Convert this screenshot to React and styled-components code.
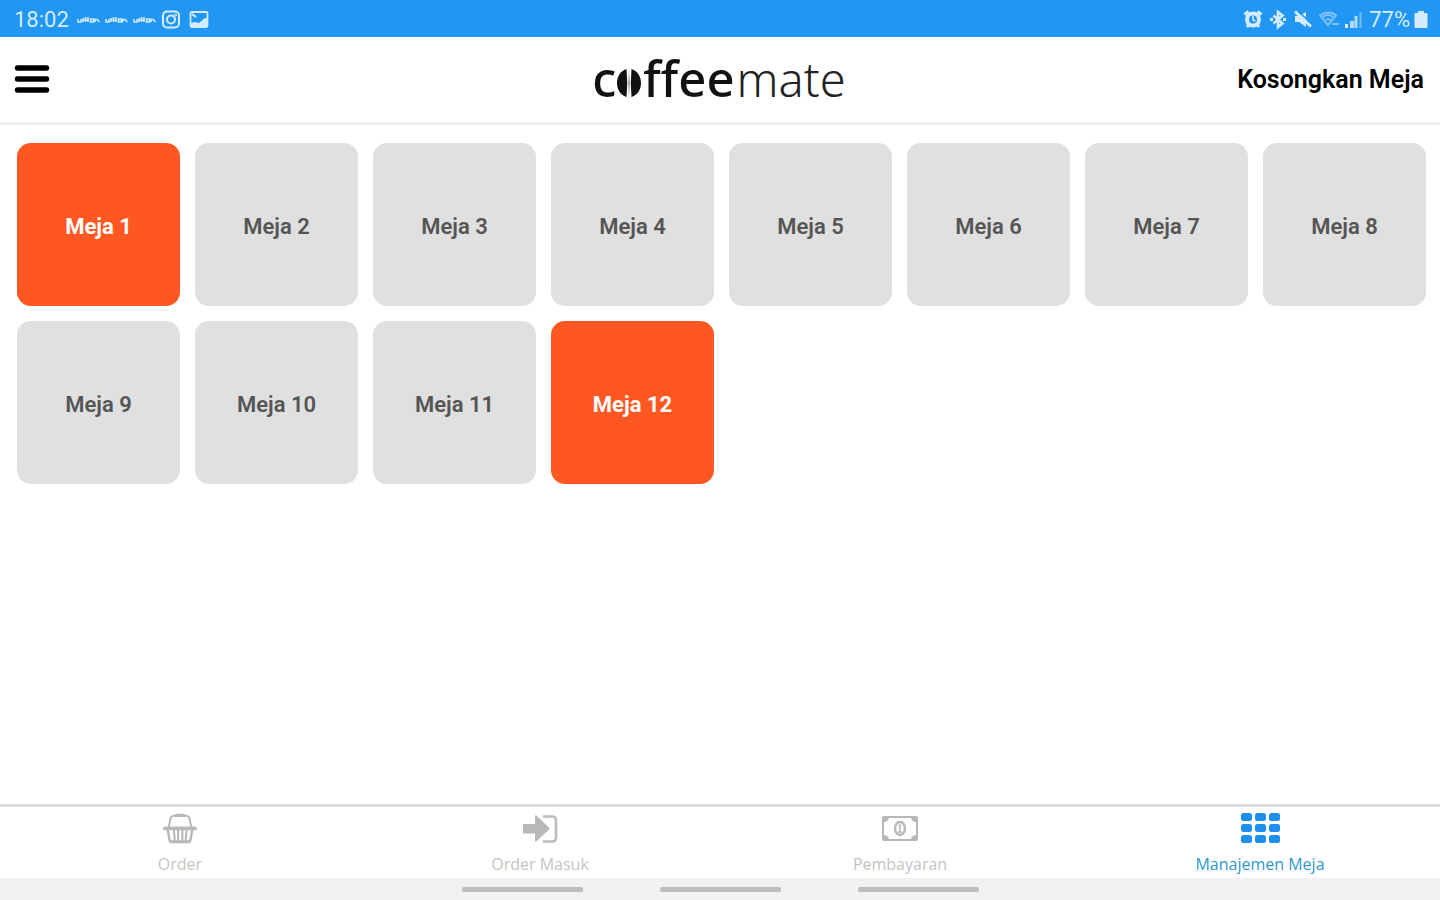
import React from "react";
import styled, { createGlobalStyle } from "styled-components";

const GlobalStyle = createGlobalStyle`
  *, *::before, *::after { box-sizing: border-box; }
  body {
    margin: 0;
    background: #fff;
    color: #000;
    font-family: Roboto, "Liberation Sans", sans-serif;
  }
`;

const Screen = styled.div`
  display: flex;
  flex-direction: column;
  min-height: 100vh;
`;

const StatusBar = styled.div`
  display: flex;
  align-items: center;
  justify-content: space-between;
  height: 37px;
  padding: 2px 12px 0 14px;
  background: #2196f3;
  color: #d3ecff;
  font-size: 22px;
  line-height: 24px;
`;

const StatusGroup = styled.div`
  display: flex;
  align-items: center;
  gap: ${(p) => p.$gap}px;
`;

const StatusIcon = styled.svg`
  display: block;
  flex: none;
`;

const Header = styled.header`
  display: grid;
  grid-template-columns: 1fr auto 1fr;
  align-items: center;
  height: 88px;
  padding: 0 16px 0 14px;
  border-bottom: 3px solid #eeeeee;
`;

const PlainButton = styled.button`
  padding: 0;
  border: 0;
  background: none;
  color: inherit;
  font-family: inherit;
  cursor: pointer;
`;

const MenuButton = styled(PlainButton)`
  justify-self: start;
  svg { display: block; }
`;

const ClearButton = styled(PlainButton)`
  justify-self: end;
  font-size: 25px;
  font-weight: 600;
  line-height: 28px;
`;

const Logo = styled.h1`
  display: flex;
  align-items: baseline;
  margin: 0;
  padding-bottom: 2px;
  font-family: "Noto Sans", "Open Sans", sans-serif;
  font-size: 49px;
  font-weight: 500;
  line-height: 64px;
  color: #111;
`;

const LogoLight = styled.span`
  padding-left: 2px;
  font-size: 47px;
  font-weight: 350;
  color: #222;
`;

const Bean = styled.svg`
  margin: 0 2px 0 1px;
`;

const TableGrid = styled.main`
  flex: 1;
  display: grid;
  grid-template-columns: repeat(8, minmax(0, 1fr));
  align-content: start;
  gap: 15px;
  padding: 18px 14px 18px 17px;
`;

const TableTile = styled(PlainButton)`
  aspect-ratio: 1;
  padding-top: 4px;
  border-radius: 14px;
  background: ${(p) => (p.$busy ? "#ff5722" : "#e0e0e0")};
  color: ${(p) => (p.$busy ? "#fff" : "#555")};
  font-size: 22px;
  font-weight: ${(p) => (p.$busy ? 700 : 600)};
  line-height: 26px;
`;

const TabBar = styled.nav`
  display: grid;
  grid-template-columns: repeat(4, 1fr);
  height: 74px;
  border-top: 3px solid #dddddd;
`;

const Tab = styled.a`
  display: flex;
  flex-direction: column;
  align-items: center;
  gap: 9px;
  padding-top: 5px;
  color: ${(p) => (p.$active ? "#2f97d0" : "#c4c4c4")};
  font-family: "Open Sans", "Noto Sans", sans-serif;
  font-size: 16px;
  font-weight: ${(p) => (p.$active ? 500 : 400)};
  line-height: 22px;
  text-decoration: none;
  svg { display: block; }
`;

const GestureBar = styled.div`
  display: flex;
  justify-content: center;
  gap: 77px;
  height: 22px;
  padding-top: 9px;
  background: #f1f1f1;
`;

const Handle = styled.span`
  width: 121px;
  height: 5px;
  border-radius: 2px;
  background: #bdbdbd;
`;

const Carrier = () => (
  <StatusIcon width="24" height="10" viewBox="0 0 24 10" fill="none" stroke="currentColor" strokeWidth="1.6" aria-hidden="true">
    <path d="M1 4v3h3V4M6 7V3M8.500 7V2M6 5h5M11 7V2M13.500 7V4h3v3zM18 7V4.500h2L22.500 7" />
  </StatusIcon>
);

const CameraIcon = () => (
  <StatusIcon width="20" height="20" viewBox="0 0 20 20" fill="none" stroke="currentColor" strokeWidth="2" aria-hidden="true">
    <rect x="2" y="1.500" width="16" height="16" rx="4" />
    <circle cx="10" cy="9.500" r="4" />
    <circle cx="14.500" cy="5" r="0.500" />
  </StatusIcon>
);

const PictureIcon = () => (
  <StatusIcon width="20" height="18" viewBox="0 0 20 18" aria-hidden="true">
    <rect x="1.500" y="1" width="17" height="15" rx="1.500" fill="none" stroke="currentColor" strokeWidth="1.800" />
    <path d="M2 12l4-1 4 1 6-5 3 1v8H2z" fill="currentColor" />
    <path d="M3 3l4 3" stroke="currentColor" strokeWidth="2" />
  </StatusIcon>
);

const AlarmIcon = () => (
  <StatusIcon width="20" height="20" viewBox="0 0 20 20" fill="none" stroke="currentColor" aria-hidden="true">
    <circle cx="10" cy="9.500" r="6" strokeWidth="4" />
    <path d="M1.500 4.500l4-3M18.500 4.500l-4-3M4 17l2-3M16 17l-2-3" strokeWidth="3" />
    <path d="M10 6v4l2.500 1" strokeWidth="1.600" />
  </StatusIcon>
);

const BluetoothIcon = () => (
  <StatusIcon width="18" height="20" viewBox="0 0 18 20" fill="none" stroke="currentColor" strokeWidth="2.600" aria-hidden="true">
    <path d="M4.500 5.500l9 8L9 17V2l4.500 3.500-9 8" />
    <path d="M1 9.500h3M14 9.500h3" strokeWidth="3" />
  </StatusIcon>
);

const MuteIcon = () => (
  <StatusIcon width="20" height="20" viewBox="0 0 20 20" aria-hidden="true">
    <path d="M2 6h4l7-4v15l-7-5H2z" fill="currentColor" />
    <path d="M2 1.500l16 15" stroke="currentColor" strokeWidth="3" />
    <path d="M5 1l14 13" stroke="#2196f3" strokeWidth="1.400" />
  </StatusIcon>
);

const WifiIcon = () => (
  <StatusIcon width="20" height="18" viewBox="0 0 20 18" fill="none" stroke="currentColor" strokeWidth="1.800" opacity="0.55" aria-hidden="true">
    <path d="M1 4.500c5-4 12-4 16 0L9 14zM4 6c3-2.500 7-2.500 10 0M7 9c1.500-1 3-1 4.500 0M13 13h7" />
  </StatusIcon>
);

const SignalIcon = () => (
  <StatusIcon width="18" height="18" viewBox="0 0 18 18" fill="currentColor" aria-hidden="true">
    <path d="M0 13h3v4H0z" />
    <path d="M5 10h4v7H5zM9.500 5h3v12h-3z" opacity="0.8" />
    <path d="M14.500 1h2v16h-2z" opacity="0.45" />
  </StatusIcon>
);

const BatteryIcon = () => (
  <StatusIcon width="14" height="20" viewBox="0 0 14 20" fill="currentColor" aria-hidden="true">
    <path d="M4 1h6v2h2.500q1 0 1 1v13q0 1-1 1h-11q-1 0-1-1V4q0-1 1-1H4z" />
  </StatusIcon>
);

const BasketIcon = () => (
  <svg width="34" height="32" viewBox="0 0 36 34" fill="none" stroke="#b8b8b8" aria-hidden="true">
    <path d="M6 16L8 6.500Q9 4 12 4h12q3 0 4 2.500L30 16" strokeWidth="2" />
    <path d="M14 3.500h8" strokeWidth="3.500" strokeLinecap="round" />
    <path d="M2 17.500h32" strokeWidth="4" strokeLinecap="round" />
    <path d="M5 19l2 11q.4 2 2.500 2h17q2.100 0 2.500-2l2-11" strokeWidth="2.600" />
    <path d="M8 31.500h20" strokeWidth="3" />
    <path d="M11.500 19l1 12M16 19v12M20.500 19v12M25 19l-1 12" strokeWidth="2.200" />
  </svg>
);

const EnterIcon = () => (
  <svg width="36" height="32" viewBox="0 0 36 32" aria-hidden="true">
    <path d="M1 12h12V4.500q0-2 1.800-.6L27 15.500q1 1 0 2L14.800 29q-1.800 1.400-1.800-.6V21.500H1.500q-.5 0-.5-1z" fill="#b8b8b8" />
    <path d="M21 4.500h9q4 0 4 4v17q0 4-4 4h-9" fill="none" stroke="#bcbcbc" strokeWidth="2.600" />
  </svg>
);

const MoneyIcon = () => (
  <svg width="38" height="32" viewBox="0 0 38 32" fill="none" stroke="#b8b8b8" aria-hidden="true">
    <rect x="2" y="5" width="34" height="23" rx="1" strokeWidth="2" />
    <path d="M2 5h6q0 5-6 5zM36 5h-6q0 5 6 5zM2 28h6q0-5-6-5zM36 28h-6q0-5 6-5z" fill="#b8b8b8" stroke="none" />
    <ellipse cx="19" cy="16.500" rx="5" ry="6.500" strokeWidth="2.400" />
    <path d="M17.500 14l1.500-1v7M17 20h4" strokeWidth="1.500" />
  </svg>
);

const GridIcon = () => (
  <svg width="40" height="32" viewBox="0 0 40 32" fill="#1e8fee" aria-hidden="true">
    {[1, 12, 23].map((y) =>
      [1, 15, 29].map((x) => <rect key={`${x}-${y}`} x={x} y={y} width="11" height="8" rx="2.500" />)
    )}
  </svg>
);

const tables = Array.from({ length: 12 }, (_, i) => i + 1);
const busyTables = [1, 12];

const tabs = [
  { label: "Order", Icon: BasketIcon },
  { label: "Order Masuk", Icon: EnterIcon },
  { label: "Pembayaran", Icon: MoneyIcon },
  { label: "Manajemen Meja", Icon: GridIcon, active: true },
];

export default function App() {
  return (
    <Screen>
      <GlobalStyle />
      <StatusBar>
        <StatusGroup $gap={8}>
          <span>18:02</span>
          <StatusGroup $gap={4}>
            <Carrier />
            <Carrier />
            <Carrier />
            <StatusGroup $gap={8}>
              <CameraIcon />
              <PictureIcon />
            </StatusGroup>
          </StatusGroup>
        </StatusGroup>
        <StatusGroup $gap={6}>
          <AlarmIcon />
          <BluetoothIcon />
          <MuteIcon />
          <WifiIcon />
          <SignalIcon />
          <StatusGroup $gap={4}>
            <span>77%</span>
            <BatteryIcon />
          </StatusGroup>
        </StatusGroup>
      </StatusBar>

      <Header>
        <MenuButton type="button" aria-label="Menu">
          <svg width="36" height="32" viewBox="0 0 36 32">
            <path d="M3.500 4h29M3.500 15h29M3.500 26h29" fill="none" stroke="#000" strokeWidth="5.500" strokeLinecap="round" />
          </svg>
        </MenuButton>
        <Logo aria-label="coffeemate">
          <span>c</span>
          <Bean width="24" height="28" viewBox="0 0 24 28" fill="#111" aria-hidden="true">
            <path d="M9.500 0C3 2 0 8 0 14s3 12 9.500 14q1.500-14 0-28zM14.500 0C21 2 24 8 24 14s-3 12-9.500 14q-1.500-14 0-28z" />
            <path d="M12 0q1.500 14 0 28q-1.500-14 0-28z" opacity="0.5" />
          </Bean>
          <span>ffee</span>
          <LogoLight>mate</LogoLight>
        </Logo>
        <ClearButton type="button">Kosongkan Meja</ClearButton>
      </Header>

      <TableGrid>
        {tables.map((n) => (
          <TableTile key={n} type="button" $busy={busyTables.includes(n)}>
            Meja {n}
          </TableTile>
        ))}
      </TableGrid>

      <TabBar>
        {tabs.map(({ label, Icon, active }) => (
          <Tab key={label} href="#" $active={active} aria-current={active ? "page" : undefined}>
            <Icon />
            {label}
          </Tab>
        ))}
      </TabBar>
      <GestureBar>
        <Handle />
        <Handle />
        <Handle />
      </GestureBar>
    </Screen>
  );
}
